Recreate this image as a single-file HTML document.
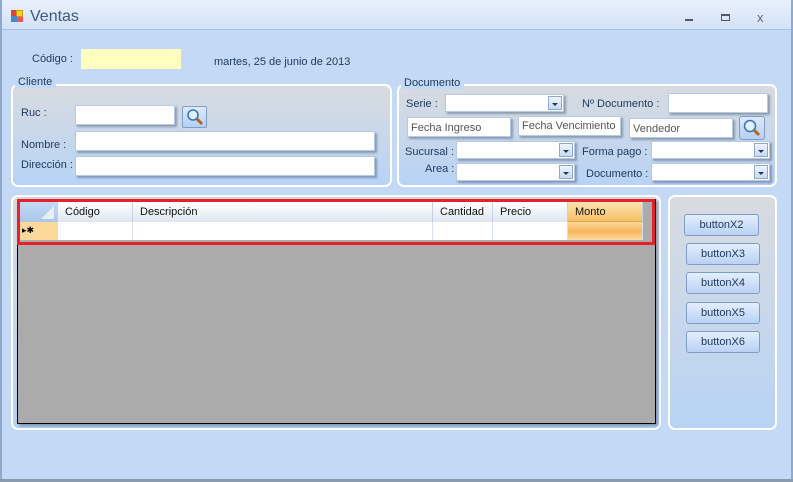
<!DOCTYPE html><html><head><meta charset="utf-8"><style>
*{margin:0;padding:0;box-sizing:border-box}
body{width:793px;height:482px;overflow:hidden;background:#c4d9f5;font-family:"Liberation Sans",sans-serif;font-size:11px;color:#1e395b;position:relative}
.a{position:absolute}
.tb{background:#fff;border:1px solid #b7c9e0;box-shadow:2px 2px 2px rgba(60,80,110,.45)}
.yl{background:#ffffc0}
.grp{border:2px solid #fff;border-radius:7px;background:linear-gradient(#d8dbe0,#b8d3f5)}
.lbl{position:absolute;color:#1e395b;font-size:11px}
.cb{background:#fff;border:1px solid #b7c9e0;box-shadow:2px 2px 2px rgba(60,80,110,.45)}
.cb i{position:absolute;right:1px;top:1px;bottom:1px;width:14px;background:linear-gradient(#eef4fc,#c7daf3);border:1px solid #8fa9cc}
.cb i:after{content:"";position:absolute;left:3px;top:6px;border:3px solid transparent;border-top:3px solid #1e395b}
.ph{font-size:11px;color:#555;padding:4px 0 0 3px;white-space:nowrap;overflow:hidden}
.btn{position:absolute;border:1px solid #7f9dc6;border-radius:3px;background:linear-gradient(#e4eefc,#b9d2f4);text-align:center;font-size:11px;line-height:21px;color:#1e395b}
.hc{position:absolute;top:0;height:20px;border-right:1px solid #c5d2e2;padding:4px 0 0 7px;font-size:11px;color:#111;background:linear-gradient(#fff,#e0e6ef)}
.rc{position:absolute;top:20px;height:18px;border-right:1px solid #d5dfea;background:#fff}
</style></head><body>
<div class="a" style="left:0;top:0;width:793px;height:30px;background:linear-gradient(#e9f0fb,#d3e2f6);border-bottom:1px solid #a8c2e6"></div>
<div class="a" style="left:0;top:0;width:2px;height:482px;background:#8ea9cc"></div>
<div class="a" style="left:791px;top:0;width:2px;height:482px;background:#8ea9cc"></div>
<div class="a" style="left:0;top:479px;width:793px;height:3px;background:#8a9bb0"></div>
<div class="a" style="left:11px;top:10px;width:12px;height:12px">
<div class="a" style="left:0;top:0;width:6px;height:6px;background:#d43"></div><div class="a" style="left:5px;top:0;width:7px;height:7px;background:#fc3;border:1px solid #c90"></div><div class="a" style="left:0;top:6px;width:6px;height:6px;background:#48c"></div><div class="a" style="left:6px;top:7px;width:6px;height:5px;background:#e55"></div></div>
<div class="a" style="left:30px;top:8px;font-size:16px;color:#3d5a80">Ventas</div>
<div class="a" style="left:685px;top:19px;width:8px;height:2px;background:#556"></div>
<div class="a" style="left:721px;top:14px;width:9px;height:7px;border:1px solid #556;border-top-width:2px"></div>
<div class="a" style="left:757px;top:10px;font-size:13px;color:#667">x</div>

<div class="lbl" style="left:32px;top:53px">Código :</div>
<div class="a yl" style="left:81px;top:49px;width:100px;height:20px"></div>
<div class="lbl" style="left:214px;top:56px">martes, 25 de junio de 2013</div>

<div class="a grp" style="left:11px;top:84px;width:381px;height:103px"></div>
<div class="lbl" style="left:15px;top:76px;background:#c4d9f5;padding:0 4px 0 3px">Cliente</div>
<div class="lbl" style="left:21px;top:107px">Ruc :</div>
<div class="a tb" style="left:75px;top:105px;width:100px;height:20px"></div>
<div class="a" style="left:182px;top:106px;width:25px;height:22px;border:1px solid #7f9dc6;border-radius:2px;background:linear-gradient(#dfeafb,#b4cff3)"><svg width="23" height="20"><circle cx="10" cy="8" r="5" fill="#dff2ff" stroke="#3a78b5" stroke-width="1.6"/><line x1="14" y1="12" x2="19" y2="17" stroke="#b5651d" stroke-width="3"/></svg></div>
<div class="lbl" style="left:21px;top:139px">Nombre :</div>
<div class="a tb" style="left:75px;top:131px;width:300px;height:20px"></div>
<div class="lbl" style="left:21px;top:159px">Dirección :</div>
<div class="a tb" style="left:75px;top:156px;width:300px;height:20px"></div>

<div class="a grp" style="left:397px;top:84px;width:380px;height:103px"></div>
<div class="lbl" style="left:401px;top:77px;background:#c4d9f5;padding:0 4px 0 3px">Documento</div>
<div class="lbl" style="left:406px;top:98px">Serie :</div>
<div class="a cb" style="left:445px;top:94px;width:119px;height:18px"><i></i></div>
<div class="lbl" style="left:582px;top:98px">Nº Documento :</div>
<div class="a tb" style="left:668px;top:93px;width:100px;height:20px"></div>
<div class="a tb ph" style="left:407px;top:117px;width:104px;height:20px">Fecha Ingreso</div>
<div class="a tb ph" style="left:518px;top:116px;width:103px;height:20px;padding-top:3px">Fecha Vencimiento</div>
<div class="a tb ph" style="left:629px;top:118px;width:104px;height:20px">Vendedor</div>
<div class="a" style="left:739px;top:116px;width:26px;height:24px;border:1px solid #7f9dc6;border-radius:3px;background:linear-gradient(#dfeafb,#b4cff3)"><svg width="24" height="22"><circle cx="10" cy="9" r="5.5" fill="#dff2ff" stroke="#3a78b5" stroke-width="1.6"/><line x1="14" y1="13" x2="19" y2="18" stroke="#b5651d" stroke-width="3"/></svg></div>
<div class="lbl" style="left:405px;top:146px">Sucursal :</div>
<div class="a cb" style="left:456px;top:141px;width:119px;height:18px"><i></i></div>
<div class="lbl" style="left:582px;top:146px">Forma pago :</div>
<div class="a cb" style="left:651px;top:141px;width:119px;height:18px"><i></i></div>
<div class="lbl" style="left:425px;top:163px">Area :</div>
<div class="a cb" style="left:456px;top:163px;width:119px;height:18px"><i></i></div>
<div class="lbl" style="left:586px;top:168px">Documento :</div>
<div class="a cb" style="left:651px;top:163px;width:119px;height:18px"><i></i></div>

<div class="a grp" style="left:11px;top:195px;width:650px;height:235px"></div>
<div class="a grp" style="left:668px;top:195px;width:109px;height:235px"></div>
<div class="a" style="left:17px;top:199px;width:639px;height:225px;background:#ababab;border:1px solid #000;box-shadow:2px 2px 3px rgba(60,80,110,.5)"></div>
<div class="a" style="left:17px;top:199px;width:638px;height:46px;border:3px solid #e8202a;background:#ababab">
<div class="a" style="left:0;top:0;width:631px;height:40px">
<div class="hc" style="left:0;width:38px;background:linear-gradient(#c6daf3,#a9c6ea);padding:0"><svg width="37" height="20"><polygon points="34,4 34,17 21,17" fill="#e6eef8"/></svg></div>
<div class="hc" style="left:38px;width:75px">Código</div>
<div class="hc" style="left:113px;width:300px">Descripción</div>
<div class="hc" style="left:413px;width:60px">Cantidad</div>
<div class="hc" style="left:473px;width:75px">Precio</div>
<div class="hc" style="left:548px;width:75px;background:linear-gradient(#fbe3b0,#f6c067);border-bottom:1px solid #e9a040">Monto</div>
<div class="rc" style="left:0;width:38px;background:#fcd89a;font-size:9px;padding:3px 0 0 2px;color:#000">▸✱</div>
<div class="rc" style="left:38px;width:75px"></div>
<div class="rc" style="left:113px;width:300px"></div>
<div class="rc" style="left:413px;width:60px"></div>
<div class="rc" style="left:473px;width:75px"></div>
<div class="rc" style="left:548px;width:75px;background:linear-gradient(#fbd9a0,#f8b55b,#fbd9a0)"></div>
</div></div>

<div class="btn" style="left:684px;top:214px;width:75px;height:22px">buttonX2</div>
<div class="btn" style="left:686px;top:243px;width:74px;height:22px">buttonX3</div>
<div class="btn" style="left:686px;top:272px;width:74px;height:22px">buttonX4</div>
<div class="btn" style="left:686px;top:302px;width:74px;height:22px">buttonX5</div>
<div class="btn" style="left:686px;top:331px;width:74px;height:22px">buttonX6</div>
</body></html>
